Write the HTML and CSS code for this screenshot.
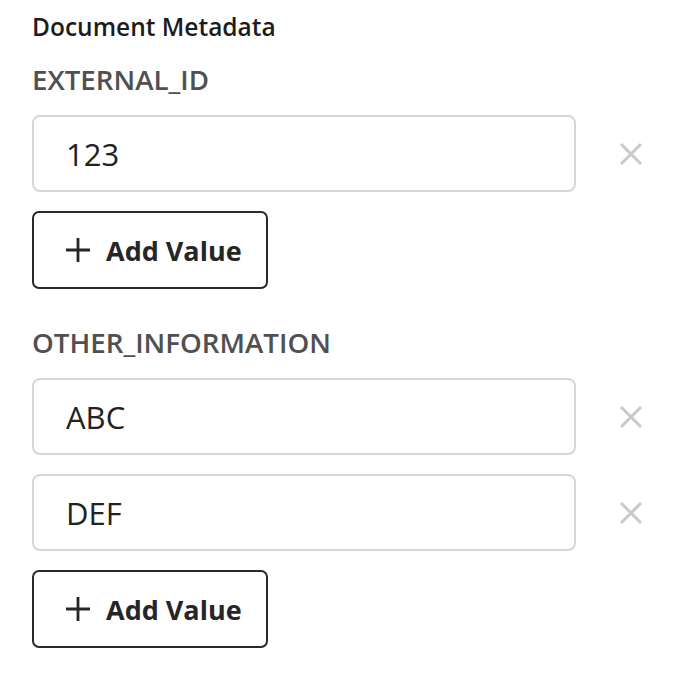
FILE: index.html
```html
<!DOCTYPE html>
<html lang="en">
<head>
  <meta charset="UTF-8">
  <title>Document Metadata</title>
  <link rel="stylesheet" href="styles.css">
</head>
<body>
  <div class="meta">
    <h2 class="meta-title">Document Metadata</h2>

    <div class="field">
      <div class="field-label">EXTERNAL_ID</div>
      <div class="value-row">
        <input class="value-input" type="text" value="123" />
        <button class="remove" title="Remove">
          <svg viewBox="0 0 24 24" width="24" height="24"><path d="M2 2 L22 22 M22 2 L2 22" /></svg>
        </button>
      </div>
      <button class="add-btn">
        <svg viewBox="0 0 26 26" width="26" height="26"><path d="M13 1 V25 M1 13 H25" /></svg>
        Add Value
      </button>
    </div>

    <div class="field">
      <div class="field-label">OTHER_INFORMATION</div>
      <div class="value-row">
        <input class="value-input" type="text" value="ABC" />
        <button class="remove" title="Remove">
          <svg viewBox="0 0 24 24" width="24" height="24"><path d="M2 2 L22 22 M22 2 L2 22" /></svg>
        </button>
      </div>
      <div class="value-row">
        <input class="value-input" type="text" value="DEF" />
        <button class="remove" title="Remove">
          <svg viewBox="0 0 24 24" width="24" height="24"><path d="M2 2 L22 22 M22 2 L2 22" /></svg>
        </button>
      </div>
      <button class="add-btn">
        <svg viewBox="0 0 26 26" width="26" height="26"><path d="M13 1 V25 M1 13 H25" /></svg>
        Add Value
      </button>
    </div>
  </div>
</body>
</html>
```

FILE: styles.css
```css
body { margin: 0; background: #fff; font-family: "Open Sans", "Noto Sans", sans-serif; color: #222; }
.meta { padding: 11px 32px 20px 32px; }
.meta-title { margin: 0; font-size: 24.5px; line-height: 32px; font-weight: 600; color: #1c1c1c; }
.field { display: flex; flex-direction: column; align-items: flex-start; gap: 19px; margin-top: 18px; }
.field + .field { margin-top: 35px; }
.field-label { font-size: 27.7px; line-height: 36px; font-weight: 600; color: #505050; margin-bottom: -1px; }
.value-row { display: flex; align-items: center; gap: 43px; }
.value-input { box-sizing: border-box; width: 544px; height: 77px; padding: 0 32px; border: 2px solid #d6d6d6; border-radius: 8px; font-family: inherit; font-size: 31px; color: #222; background: #fff; outline: none; }
.remove { display: flex; padding: 0; border: none; background: none; cursor: pointer; }
.remove path { stroke: #c9c9c9; stroke-width: 3; fill: none; }
.add-btn { box-sizing: border-box; display: flex; align-items: center; gap: 15px; width: 236px; height: 78px; padding: 0 0 0 31px; border: 2px solid #2a2a2a; border-radius: 7px; background: #fff; font-family: inherit; font-size: 27px; font-weight: 700; color: #262626; cursor: pointer; }
.add-btn path { stroke: #262626; stroke-width: 2.8; fill: none; }
```
